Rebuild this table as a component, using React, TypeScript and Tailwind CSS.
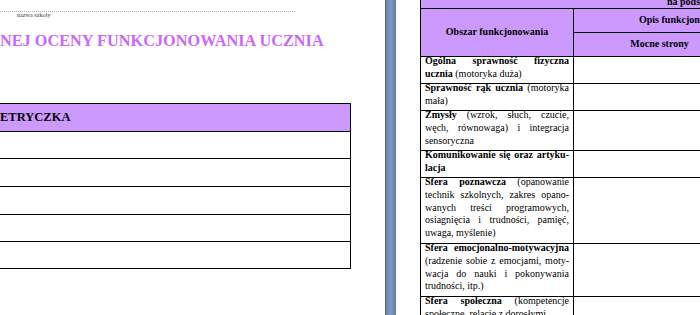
import type { ReactNode } from 'react'

const serif = "font-['Liberation_Serif','Times_New_Roman',serif]"

function Line({ children, last }: { children: ReactNode; last?: boolean }) {
  return (
    <div className={last ? 'whitespace-nowrap text-left' : 'whitespace-nowrap text-justify [text-align-last:justify]'}>
      {children}
    </div>
  )
}

const areas: ReactNode[][] = [
  [
    <b>Ogólna sprawność fizyczna</b>,
    <><b>ucznia</b> (motoryka duża)</>,
  ],
  [
    <><b>Sprawność rąk ucznia</b> (motoryka</>,
    <>mała)</>,
  ],
  [
    <><b>Zmysły</b> (wzrok, słuch, czucie,</>,
    <>węch, równowaga) i integracja</>,
    <>sensoryczna</>,
  ],
  [
    <b>Komunikowanie się oraz artyku-</b>,
    <b>lacja</b>,
  ],
  [
    <><b>Sfera poznawcza</b> (opanowanie</>,
    <>technik szkolnych, zakres opano-</>,
    <>wanych treści programowych,</>,
    <>osiagnięcia i trudności, pamięć,</>,
    <>uwaga, myślenie)</>,
  ],
  [
    <b>Sfera emocjonalno-motywacyjna</b>,
    <>(radzenie sobie z emocjami, moty-</>,
    <>wacja do nauki i pokonywania</>,
    <>trudności, itp.)</>,
  ],
  [
    <><b>Sfera społeczna</b> (kompetencje</>,
    <>społeczne, relacje z dorosłymi</>,
  ],
]

function LeftPage() {
  return (
    <div className={`w-[385px] h-full shrink-0 bg-white overflow-hidden ${serif}`}>
      <div className="mt-[11px] w-[295px] border-t border-dotted border-[#a3b2c9]" />
      <div className="pl-[17px] text-[6.2px] leading-[5px] text-[#444]">nazwa szkoły</div>
      <div className="mt-[14px] text-[16.3px] leading-[20px] font-bold text-[#cc66ff] whitespace-nowrap">
        NEJ OCENY FUNKCJONOWANIA UCZNIA
      </div>
      <div className="mt-[52px] w-[351px] border-t border-r border-black">
        <div className="h-[28px] bg-[#cc99ff] border-b border-black flex items-center text-[12.5px] font-bold text-black">
          ETRYCZKA
        </div>
        <div className="h-[27px] border-b border-black" />
        <div className="h-[28px] border-b border-black" />
        <div className="h-[28px] border-b border-black" />
        <div className="h-[27px] border-b border-black" />
        <div className="h-[27px] border-b border-black" />
      </div>
    </div>
  )
}

function RightPage() {
  const head = 'bg-[#cc99ff] border-r border-b border-black font-bold'
  return (
    <div className={`flex-1 h-full bg-white overflow-hidden ${serif} text-[10px] leading-[12.8px] text-black`}>
      <div className="ml-[24px] -mt-[12px] w-max grid grid-cols-[153px_172px_200px] grid-rows-[21px_24px_24px_27px_27px_40px_27px_66px_53px_80px] border-l border-black">
        <div className={`col-span-3 ${head} flex items-end pl-[246px] leading-[13px] whitespace-nowrap`}>
          na podstawie
        </div>
        <div className={`row-span-2 ${head} flex items-center justify-center whitespace-nowrap`}>
          Obszar funkcjonowania
        </div>
        <div className={`col-span-2 ${head} flex items-center pl-[65px] whitespace-nowrap`}>
          Opis funkcjonowania
        </div>
        <div className={`${head} flex items-center justify-center whitespace-nowrap`}>Mocne strony</div>
        <div className={head} />
        {areas.map((lines, i) => (
          <div key={i} className="contents">
            <div className="border-r border-b border-black px-[4px]">
              <div className="-mt-[2px]">
                {lines.map((l, j) => (
                  <Line key={j} last={j === lines.length - 1}>
                    {l}
                  </Line>
                ))}
              </div>
            </div>
            <div className="border-r border-b border-black" />
            <div className="border-r border-b border-black" />
          </div>
        ))}
      </div>
    </div>
  )
}

export default function App() {
  return (
    <div className="w-[700px] h-[315px] overflow-hidden flex bg-white">
      <LeftPage />
      <div className="w-[11px] h-full shrink-0 border-l border-[#56657b] bg-linear-to-r from-[#6d85a8] via-[#7f9bc5] to-[#5f7ca8]" />
      <RightPage />
    </div>
  )
}
